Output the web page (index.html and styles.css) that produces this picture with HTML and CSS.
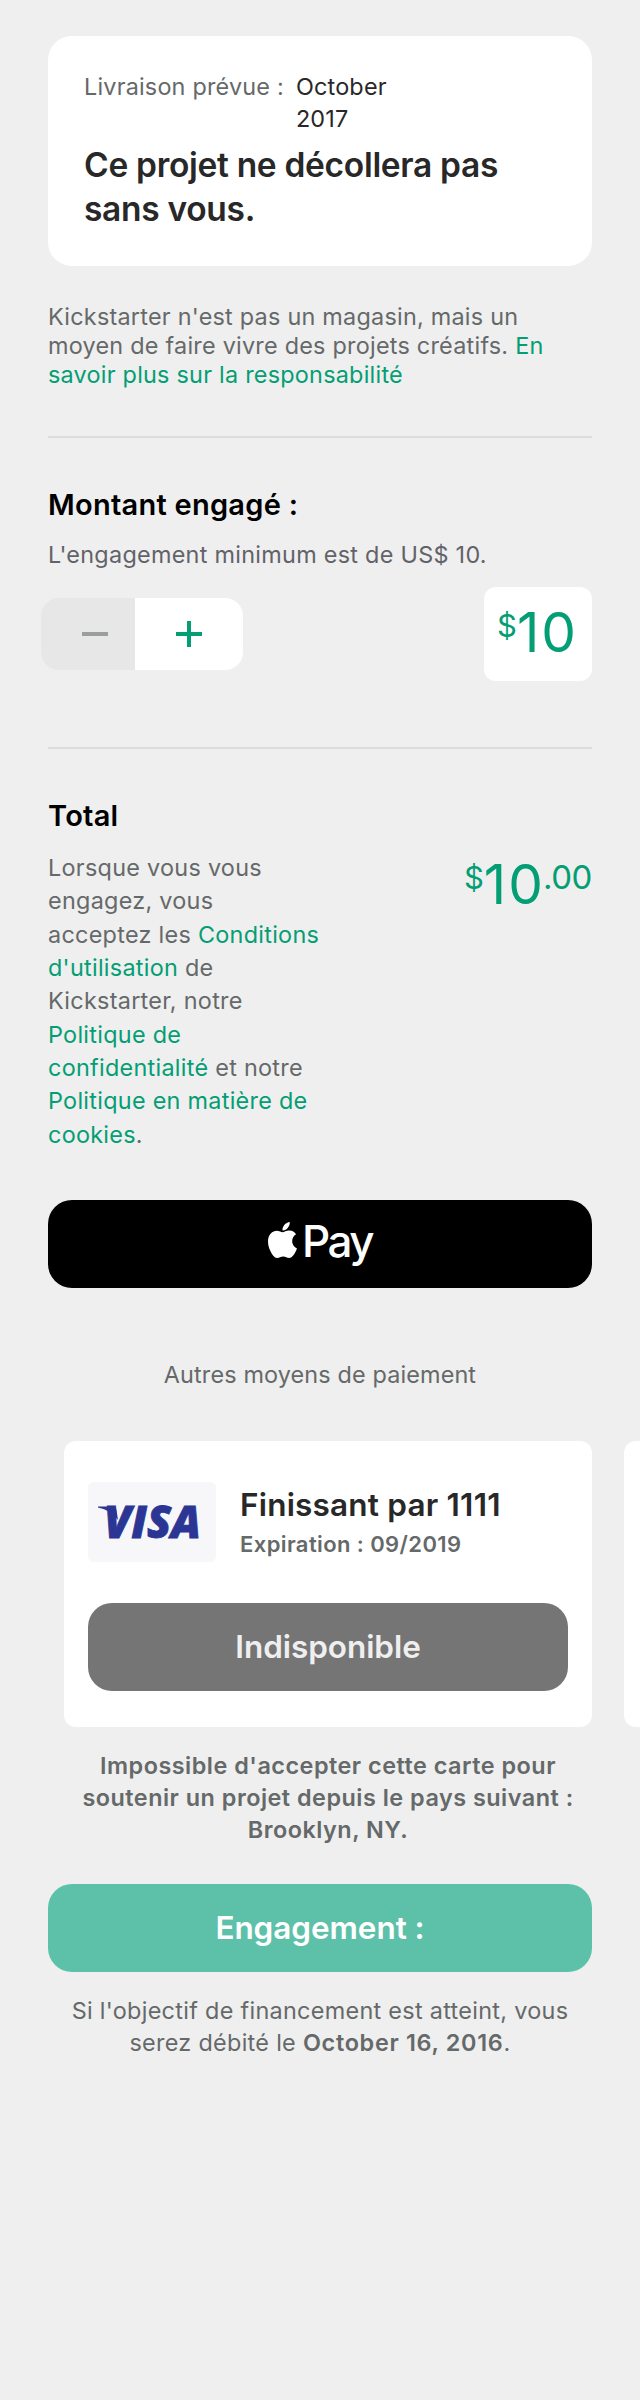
FILE: index.html
```html
<!DOCTYPE html>
<html lang="fr">
<head>
<meta charset="utf-8">
<title>Engagement</title>
<link rel="stylesheet" href="styles.css">
</head>
<body>
<main class="page">
  <section class="reward">
    <div class="delivery">
      <span class="delivery-label">Livraison prévue :</span>
      <span class="delivery-date">October<br>2017</span>
    </div>
    <h1 class="reward-title">Ce projet ne décollera pas<br>sans vous.</h1>
  </section>

  <p class="disclaimer">Kickstarter n'est pas un magasin, mais un<br>moyen de faire vivre des projets créatifs. <a class="link">En<br>savoir plus sur la responsabilité</a></p>

  <hr class="divider">

  <section class="pledge">
    <h2 class="heading">Montant engagé :</h2>
    <p class="minimum">L'engagement minimum est de US$ 10.</p>
    <div class="pledge-row">
      <div class="stepper">
        <button class="step step-minus" aria-label="Moins">
          <svg width="26" height="26" viewBox="0 0 26 26"><path d="M0 13H26" stroke="#9a9e9e" stroke-width="4"/></svg>
        </button>
        <button class="step step-plus" aria-label="Plus">
          <svg width="26" height="26" viewBox="0 0 26 26"><path d="M0 13H26M13 0V26" stroke="#049e74" stroke-width="4"/></svg>
        </button>
      </div>
      <div class="amount amount-box"><span class="currency">$</span>10</div>
    </div>
  </section>

  <hr class="divider">

  <section class="total">
    <h2 class="heading">Total</h2>
    <div class="total-row">
      <p class="terms">Lorsque vous vous<br>engagez, vous<br>acceptez les <a class="link">Conditions<br>d'utilisation</a> de<br>Kickstarter, notre<br><a class="link">Politique de<br>confidentialité</a> et notre<br><a class="link">Politique en matière de<br>cookies</a>.</p>
      <div class="amount amount-total"><span class="currency">$</span>10<span class="cents">.00</span></div>
    </div>
  </section>

  <button class="button apple-pay">
    <svg class="apple" viewBox="4 32 377 448" preserveAspectRatio="none"><path fill="#fff" d="M318.700 268.700c-.2-36.700 16.400-64.400 50-84.800-18.800-26.900-47.200-41.700-84.700-44.600-35.500-2.800-74.300 20.700-88.500 20.700-15 0-49.400-19.700-76.400-19.700C63.300 141.200 4 184.800 4 273.500q0 39.300 14.400 81.200c12.800 36.700 59 126.700 107.200 125.200 25.200-.6 43-17.900 75.800-17.900 31.800 0 48.300 17.900 76.400 17.900 48.600-.7 90.400-82.500 102.600-119.300-65.200-30.700-61.700-90-61.700-91.900zm-56.600-164.200c27.300-32.400 24.800-61.900 24-72.500-24.100 1.400-52 16.400-67.900 34.900-17.500 19.800-27.800 44.300-25.600 71.900 26.100 2 49.900-11.400 69.500-34.300z"/></svg>
    <span class="apple-pay-text">Pay</span>
  </button>

  <p class="other">Autres moyens de paiement</p>

  <section class="carousel">
    <article class="card">
      <div class="card-head">
        <svg class="visa" width="128" height="80" viewBox="0 0 128 80">
          <rect width="128" height="80" rx="6" fill="#f7f7f9"/>
          <path d="M10 24.500H25Q28 24.500 28.500 28L30 38Q23 28 10 25.500Z" fill="#2a3594"/>
          <text class="visa-text" x="16" y="56" textLength="97" lengthAdjust="spacingAndGlyphs">VISA</text>
        </svg>
        <div class="card-info">
          <div class="card-name">Finissant par 1111</div>
          <div class="card-expiry">Expiration : 09/2019</div>
        </div>
      </div>
      <button class="button unavailable">Indisponible</button>
    </article>
    <article class="card card-next"></article>
  </section>

  <p class="card-note">Impossible d'accepter cette carte pour<br>soutenir un projet depuis le pays suivant :<br>Brooklyn, NY.</p>

  <button class="button submit">Engagement :</button>

  <p class="charge">Si l'objectif de financement est atteint, vous<br>serez débité le <strong>October 16, 2016</strong>.</p>
</main>
</body>
</html>
```
FILE: styles.css
```css
* {
  box-sizing: border-box;
}

body {
  margin: 0;
  background: #efefef;
  color: #656969;
  font: 400 23.4px/32px Inter, "Liberation Sans", sans-serif;
  letter-spacing: 0.28px;
}

h1, h2, p {
  margin: 0;
  white-space: nowrap;
}

.page {
  display: flex;
  flex-direction: column;
  width: 640px;
  height: 2400px;
  padding: 36px 48px 0;
  overflow: hidden;
}

.page > * {
  flex: none;
}

.link {
  color: #049e74;
}

.divider {
  width: 100%;
  height: 2px;
  margin: 0;
  border: 0;
  background: #dcdcdc;
}

.heading {
  color: #000;
  font-size: 29px;
  font-weight: 600;
  line-height: 36px;
  letter-spacing: 0.26px;
}

.reward {
  height: 230px;
  padding: 35px 36px 0;
  border-radius: 24px;
  background: #fff;
}

.delivery {
  display: flex;
  gap: 12px;
  letter-spacing: 0.2px;
}

.delivery-date {
  color: #282828;
}

.reward-title {
  margin-top: 8px;
  color: #282828;
  font-size: 33.5px;
  font-weight: 600;
  line-height: 44px;
  letter-spacing: -0.3px;
}

.disclaimer {
  margin: 36px 0 47px;
  line-height: 29px;
  letter-spacing: 0.24px;
}

.pledge {
  padding: 49px 0 66px;
}

.minimum {
  margin-top: 16px;
  color: #626369;
  letter-spacing: 0.28px;
}

.pledge-row {
  display: flex;
  align-items: center;
  justify-content: space-between;
  margin: 16px 0 0 -7px;
}

.stepper {
  display: flex;
  height: 72px;
  border-radius: 18px;
  overflow: hidden;
}

.step {
  display: flex;
  align-items: center;
  padding: 0;
  border: 0;
}

.step-minus {
  width: 94px;
  padding-left: 41px;
  background: #e7e7e7;
}

.step-plus {
  width: 108px;
  padding-left: 41px;
  background: #fff;
}

.amount {
  color: #049e74;
  font-size: 55px;
  letter-spacing: 2px;
  white-space: nowrap;
}

.currency,
.cents {
  font-size: 33px;
  line-height: 0;
  vertical-align: 15px;
}

.currency {
  font-size: 31px;
  letter-spacing: 0;
}

.cents {
  margin-left: -2px;
  letter-spacing: -0.4px;
}

.amount-box {
  width: 108px;
  height: 94px;
  padding-left: 13px;
  border-radius: 12px;
  background: #fff;
  line-height: 91px;
}

.total {
  padding: 49px 0;
}

.total-row {
  display: flex;
  justify-content: space-between;
  margin-top: 17px;
}

.terms {
  line-height: 33.330px;
}

.amount-total {
  line-height: 66px;
}

.button {
  display: flex;
  align-items: center;
  justify-content: center;
  width: 100%;
  height: 88px;
  padding: 0;
  border: 0;
  border-radius: 24px;
  font-family: inherit;
  font-size: 31.5px;
  line-height: 40px;
}

.apple-pay {
  align-items: flex-start;
  background: #000;
  color: #fff;
  gap: 5px;
}

.apple {
  width: 29px;
  height: 36px;
  margin-top: 22px;
}

.apple-pay-text {
  margin-top: 19px;
  font-size: 44px;
  font-weight: 500;
  line-height: 44px;
  letter-spacing: -2.5px;
}

.other {
  margin: 71px 0 50px;
  letter-spacing: 0.14px;
  text-align: center;
}

.carousel {
  display: flex;
  gap: 32px;
  width: 592px;
  padding-left: 16px;
  overflow: hidden;
}

.card {
  flex: none;
  width: 528px;
  height: 286px;
  padding: 41px 24px 0;
  border-radius: 12px;
  background: #fff;
}

.card-head {
  display: flex;
  gap: 24px;
  margin-bottom: 41px;
}

.visa {
  flex: none;
}

.visa-text {
  fill: #2a3594;
  stroke: #2a3594;
  stroke-width: 0.8px;
  font: italic 800 43.5px "Open Sans", sans-serif;
  letter-spacing: 0;
}

.card-info {
  white-space: nowrap;
}

.card-name {
  margin-top: 3px;
  color: #282828;
  font-size: 31.5px;
  font-weight: 600;
  line-height: 40px;
  letter-spacing: 0.2px;
}

.card-expiry {
  margin-top: 3px;
  font-size: 22px;
  font-weight: 600;
  line-height: 32px;
  letter-spacing: 0.4px;
}

.unavailable {
  background: #757575;
  color: #efefef;
  font-weight: 600;
  letter-spacing: -0.05px;
}

.card-note {
  margin: 23px 0 38px 16px;
  font-weight: 600;
  letter-spacing: 0.5px;
  text-align: center;
}

.submit {
  background: #5dc1a9;
  color: #fff;
  font-weight: 600;
  letter-spacing: -0.05px;
}

.charge {
  margin-top: 23px;
  letter-spacing: 0.3px;
  text-align: center;
}

.charge strong {
  font-weight: 600;
  letter-spacing: 0.7px;
}
```
